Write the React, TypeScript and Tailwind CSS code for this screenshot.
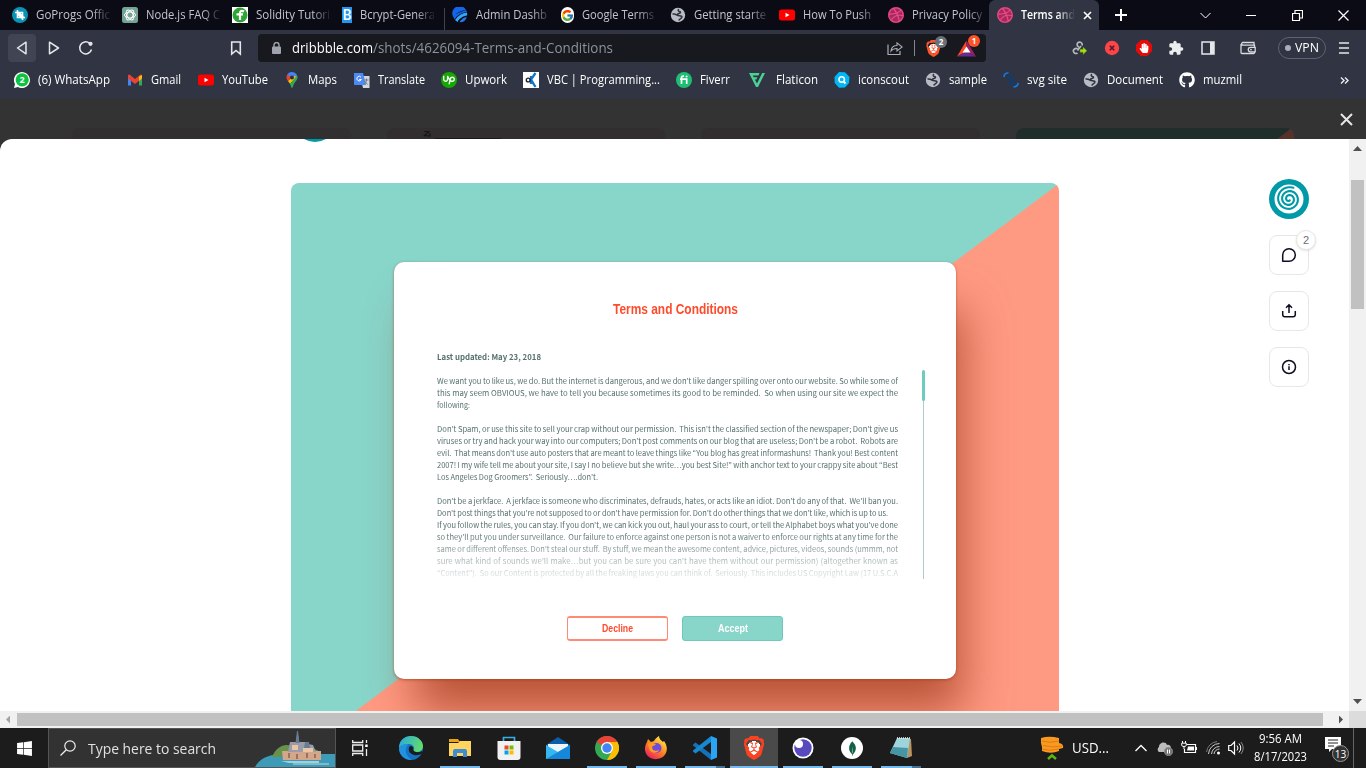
import { useLayoutEffect, useRef, type ReactNode } from "react";
import { SiBrave, SiUpwork, SiMongodb } from "react-icons/si";
import { FaGithub, FaDribbble, FaHandPaper, FaWindows } from "react-icons/fa";
import { MdExtension } from "react-icons/md";
import { FcGoogle } from "react-icons/fc";

const ui = "font-['Open_Sans','Noto_Sans',sans-serif]";

/** Single-line text condensed or widened to a given advance width. */
function Fit({ w, className = "", children }: { w: number; className?: string; children: string }) {
  const ref = useRef<HTMLSpanElement>(null);
  useLayoutEffect(() => {
    const el = ref.current;
    if (!el) return;
    el.style.transform = "none";
    const natural = el.getBoundingClientRect().width;
    if (natural) el.style.transform = `scaleX(${w / natural})`;
  }, [w, children]);
  return (
    <span className={`block shrink-0 whitespace-nowrap ${className}`} style={{ width: w }}>
      <span ref={ref} className="inline-block origin-left">{children}</span>
    </span>
  );
}

/** Paragraph line justified through its word gaps; tight lines are also condensed a little. */
function Line({ w, children }: { w: number; children: string }) {
  const ref = useRef<HTMLSpanElement>(null);
  useLayoutEffect(() => {
    const el = ref.current;
    if (!el) return;
    el.style.wordSpacing = "0px";
    el.style.transform = "none";
    const spaces = Math.max(1, children.split(" ").length - 1);
    const natural = el.getBoundingClientRect().width;
    const gap = Math.max(-0.25, (w - natural) / spaces);
    el.style.wordSpacing = `${gap}px`;
    const fitted = el.getBoundingClientRect().width;
    if (fitted) el.style.transform = `scaleX(${w / fitted})`;
  }, [w, children]);
  return (
    <div className="h-3 whitespace-pre leading-3">
      <span ref={ref} className="inline-block origin-left">{children}</span>
    </div>
  );
}

function Svg({ s = 16, v = "0 0 16 16", children }: { s?: number; v?: string; children: ReactNode }) {
  return (
    <svg width={s} height={s} viewBox={v} fill="none" className="block shrink-0">
      {children}
    </svg>
  );
}

const Globe = () => (
  <Svg>
    <circle cx="8" cy="8" r="7.2" fill="#b9bcc4" />
    <path d="M9 2.200C7.500 3 8.200 4.200 9.500 4.500c1.500.3 1.200 1.500 0 1.700-1.500.3-2.200.8-2.500 1.800M2.500 7c1.800-.3 3.200.2 4.500 1.200 1.200 1 3.200.4 4.500 1 .8.5.3 1.700-.7 2.200-1 .6-1 1.300-2.300 1.800" stroke="#30333f" strokeWidth="1.500" />
  </Svg>
);
const YouTube = () => (
  <Svg>
    <rect x="0" y="2.500" width="16" height="11" rx="2.500" fill="#f00" />
    <path d="M6.500 5.700v4.600l4-2.300z" fill="#fff" />
  </Svg>
);
const Dribbble = () => (
  <span className="flex size-4 items-center justify-center rounded-full bg-[#a82a5c] text-[16px] text-[#ea4c89]">
    <FaDribbble />
  </span>
);

const tabs: { w: number; pl: number; t: string; tw: number; icon: ReactNode; last?: boolean }[] = [
  { w: 115, pl: 12, t: "GoProgs Offic", tw: 74, icon: <Svg><circle cx="8" cy="8" r="8" fill="#0a93b5" /><path d="M5.500 3v7.500H13M3 5.500h7.500V13" stroke="#fff" strokeWidth="1.600" /><path d="m6 6 4.500 4.500" stroke="#fff" strokeWidth="3.500" /></Svg> },
  { w: 110, pl: 7, t: "Node.js FAQ C", tw: 74, icon: <Svg><rect width="16" height="16" rx="2.500" fill="#74a594" /><g stroke="#fff" strokeWidth="1"><ellipse cx="8" cy="8" rx="5.500" ry="3" /><ellipse cx="8" cy="8" rx="5.500" ry="3" transform="rotate(60 8 8)" /><ellipse cx="8" cy="8" rx="5.500" ry="3" transform="rotate(120 8 8)" /></g></Svg> },
  { w: 110, pl: 7, t: "Solidity Tutori", tw: 74, icon: <Svg><path fill="#fff" d="M0 0h16v16H0z" /><circle cx="8" cy="8" r="7.500" fill="#2fa336" /><path d="M12 4.500C9.500 3 8 4 8 6.500V13M4.500 7.300h6.500" stroke="#fff" strokeWidth="2.200" /></Svg> },
  { w: 110, pl: 7, t: "Bcrypt-Genera", tw: 75, icon: <span className="flex size-4 items-center justify-center bg-[#2196f3] font-['Roboto',sans-serif] text-[14px] font-medium leading-4 text-white">B</span> },
  { w: 109, pl: 7, t: "Admin Dashb", tw: 71, icon: <Svg><path d="M1 9.500A7.200 7.200 0 0 1 14 3C9 3.500 4 6 1 9.500z" fill="#1565e8" /><path d="M1.500 10.500A7.200 7.200 0 0 1 1 8L14 3l1 2C10 5.500 5 8 2.500 12.500z" fill="#1565e8" /><path d="M3 13C6 8.500 10 6 15 5.500c.3 1 .3 2 .1 3-4 .5-8 3-9.600 6.500z" fill="#37a6f7" /><path d="M7.500 15.200c1.500-3 4-4.800 7.300-5.300A7.200 7.200 0 0 1 7.500 15.200z" fill="#1f7bf0" /></Svg> },
  { w: 109, pl: 7, t: "Google Terms", tw: 72, icon: <span className="flex size-4 items-center justify-center rounded-full bg-white text-[13px]"><FcGoogle /></span> },
  { w: 109, pl: 7, t: "Getting starte", tw: 72, icon: <Globe /> },
  { w: 109, pl: 7, t: "How To Push", tw: 68, icon: <YouTube /> },
  { w: 108, pl: 7, t: "Privacy Policy", tw: 70, icon: <Dribbble />, last: true },
];

function TabStrip() {
  return (
    <div className="flex h-[30px] bg-[#0a0b14] text-[12px] text-[#c3c4cb]">
      {tabs.map((t) => (
        <div key={t.t} className="flex shrink-0 items-center gap-2" style={{ width: t.w, paddingLeft: t.pl }}>
          {t.icon}
          <div className="h-5 w-[76px] shrink-0 overflow-hidden [mask-image:linear-gradient(90deg,#000_56px,transparent_76px)]">
            <Fit w={t.tw} className="leading-5">{t.t}</Fit>
          </div>
          {!t.last && <div className="mt-2 ml-auto h-[23px] w-px bg-[#40414a]" />}
        </div>
      ))}
      <div className="flex w-[110px] shrink-0 items-center gap-2 rounded-t-[6px] bg-[#313442] pl-2 text-white">
        <Dribbble />
        <div className="h-5 w-[54px] overflow-hidden [mask-image:linear-gradient(90deg,#000_36px,transparent_54px)]">
          <Fit w={54} className="font-semibold leading-5">Terms and</Fit>
        </div>
        <Svg s={9} v="0 0 9 9"><path d="m1 1 7 7M8 1 1 8" stroke="#fff" strokeWidth="1.600" /></Svg>
      </div>
      <div className="flex w-11 items-center justify-center">
        <Svg s={12} v="0 0 12 12"><path d="M6 0v12M0 6h12" stroke="#fff" strokeWidth="2" /></Svg>
      </div>
      <div className="ml-auto flex [&>div]:flex [&>div]:w-[46px] [&>div]:items-center [&>div]:justify-center">
        <div><Svg s={11} v="0 0 11 11"><path d="m.5 3 5 5 5-5" stroke="#fff" /></Svg></div>
        <div><div className="h-px w-2.5 bg-white" /></div>
        <div><Svg s={11} v="0 0 11 11"><path d="M.5 3.500h7v7h-7zM3 3V.5h7.500V8H8" stroke="#fff" strokeWidth="1.200" /></Svg></div>
        <div><Svg s={11} v="0 0 11 11"><path d="m.5.5 10 10m0-10-10 10" stroke="#fff" strokeWidth="1.200" /></Svg></div>
      </div>
    </div>
  );
}

function Toolbar() {
  return (
    <div className="flex h-9 items-center bg-[#313442]">
      <div className="ml-2 flex h-7 w-7 items-center justify-center rounded bg-[#414452]">
        <Svg><path d="M12 2.200v11.600L3.500 8z" stroke="#e6e7ea" strokeWidth="1.500" strokeLinejoin="round" /></Svg>
      </div>
      <div className="ml-2.5"><Svg><path d="M3.500 2.200v11.600L12.500 8z" stroke="#e6e7ea" strokeWidth="1.500" strokeLinejoin="round" /></Svg></div>
      <div className="ml-4"><Svg><path d="M13.500 9.500A6 6 0 1 1 11.500 3.200" stroke="#e6e7ea" strokeWidth="1.500" /><circle cx="12.500" cy="3.800" r="2.100" fill="#e6e7ea" /></Svg></div>
      <div className="ml-[134px]"><Svg><path d="M3.700 2h8.600v12L8 10.500 3.700 14z" stroke="#e6e7ea" strokeWidth="1.600" /></Svg></div>
      <div className="ml-[14px] flex h-7 w-[728px] items-center rounded bg-[#17191f] text-[14px]">
        <div className="ml-3.5">
          <svg width="9" height="12" viewBox="0 0 9 12" fill="none" className="block"><rect y="4.500" width="9" height="7.500" rx="1" fill="#a0a3ad" /><path d="M2 5V3a2.500 2.500 0 0 1 5 0v2" stroke="#a0a3ad" strokeWidth="1.400" /></svg>
        </div>
        <Fit w={81} className="ml-[11px] leading-6 text-white">dribbble.com</Fit>
        <Fit w={240} className="leading-6 text-[#8e929b]">/shots/4626094-Terms-and-Conditions</Fit>
        <div className="ml-[274px]"><Svg><path d="M1 4.500v10h12V11" stroke="#a9acb5" strokeWidth="1.200" /><path d="M4 11c.5-4 2.500-5.500 6-5.500V2.800L15.200 7 10 11V8.500c-2.500 0-4.500.5-6 2.500z" stroke="#a9acb5" strokeWidth="1.100" /></Svg></div>
        <div className="ml-[11px] h-4 w-px bg-[#85878e]" />
        <div className="relative ml-2.5 text-[17px] text-[#fb542b]">
          <div className="[background:radial-gradient(circle,#fff_40%,transparent_42%)]"><SiBrave /></div>
          <span className="absolute -top-1 left-[10px] flex size-3 items-center justify-center rounded-full bg-[#6b7078] text-[8px] font-bold leading-3 text-white">2</span>
        </div>
        <div className="relative ml-[15px]">
          <Svg s={19} v="0 0 19 16"><path d="M9.500 0 0 16l9.500-5z" fill="#ff4724" /><path d="M0 16h19l-9.500-5z" fill="#662d91" /><path d="M9.500 0 19 16l-9.500-5z" fill="#9e1f63" /><path d="m9.500 6 4 6h-8z" fill="#fff" /></Svg>
          <span className="absolute -top-1 left-[11px] flex size-3 items-center justify-center rounded-full bg-[#fb542b] text-[8px] font-bold leading-3 text-white">1</span>
        </div>
      </div>
      <div className="ml-[86px] flex w-4"><Svg><path d="M7 7a2.500 2.500 0 1 1 3-1.500M6 9.500a2.500 2.500 0 1 0-.5 3.500M5.500 10.500 9 6" stroke="#b5b8be" strokeWidth="1.700" /><path d="M8 9.300h3V7l4 3.700L11 14.500v-2.300H8z" fill="#a4de13" stroke="#55820b" strokeWidth=".5" /></Svg></div>
      <div className="ml-4"><Svg><circle cx="8" cy="8" r="7.200" fill="#fb4549" /><path d="m5.800 5.800 4.400 4.400m0-4.400-4.400 4.400" stroke="#4c1a20" strokeWidth="1.600" /></Svg></div>
      <div className="ml-4 flex size-4 items-center justify-center bg-[#e60b0b] text-[10px] text-white [clip-path:polygon(30%_0,70%_0,100%_30%,100%_70%,70%_100%,30%_100%,0_70%,0_30%)]"><FaHandPaper /></div>
      <div className="ml-4 text-[16px] text-[#eceded]"><MdExtension /></div>
      <div className="ml-4"><Svg><path d="M2 2h12v12H2z" stroke="#e6e7ea" strokeWidth="1.500" /><path d="M10 2h4v12h-4z" fill="#e6e7ea" /></Svg></div>
      <div className="ml-6"><Svg><path d="M14 5.200V2.500H2.500a1.500 1.500 0 0 0 0 2.700M1 4v8.500a1 1 0 0 0 1 1h11.500a1 1 0 0 0 1-1M2 5.200h12.500v2.300M15.200 7.300v4.500H10.500a2.200 2.200 0 0 1 0-4.500z" stroke="#d9dade" strokeWidth="1.300" /><circle cx="11" cy="9.600" r=".9" fill="#d9dade" /></Svg></div>
      <div className="ml-[22px] flex h-[22px] w-12 items-center gap-1 rounded-full border border-[#5e6372] pl-1.5 text-[12px] text-white">
        <div className="size-1.5 shrink-0 rounded-full bg-[#a9adc0]" />
        <Fit w={24} className="leading-5">VPN</Fit>
      </div>
      <div className="ml-[13px]">
        <svg width="10" height="12" viewBox="0 0 10 12" fill="none" className="block"><path d="M0 1h10M0 6h10M0 11h10" stroke="#e6e7ea" strokeWidth="1.600" /></svg>
      </div>
    </div>
  );
}

const bookmarks: { x: number; t: string; tw: number; icon: ReactNode }[] = [
  { x: 22, t: "(6) WhatsApp", tw: 72, icon: <Svg><path d="M0 16l1-4a8 8 0 1 1 3 3z" fill="#fff" /><circle cx="8.200" cy="7.800" r="6.600" fill="#0bc33f" /><text x="5.600" y="11" fontSize="9" fontWeight="700" fill="#fff">2</text></Svg> },
  { x: 135, t: "Gmail", tw: 30, icon: <Svg><path d="M1 3v10.500h3V7z" fill="#4285f4" /><path d="M15 3v10.500h-3V7z" fill="#34a853" /><path d="M1 3v3.500L8 12l7-5.500V3l-1.500-.5L8 7 2.500 2.500z" fill="#ea4335" /><path d="M12 4.500 15 3v3.500L12 9z" fill="#fbbc04" /></Svg> },
  { x: 206, t: "YouTube", tw: 46, icon: <YouTube /> },
  { x: 292, t: "Maps", tw: 29, icon: <Svg><path d="M8 0a5.500 5.500 0 0 0-5 3l8 6.500L13.500 6A5.500 5.500 0 0 0 8 0z" fill="#4285f4" /><path d="M3 3c-1.200 2.500-.2 4.500 1 6l4-4.500z" fill="#ea4335" /><path d="M4 9c1 1.300 1.500 2 2 3l6.500-7.500-3-.5z" fill="#fbbc04" /><path d="M6 12c1 1.500 1 4 2 4s1-3 2.500-5c2-2.500 3.500-4 2.500-7.500z" fill="#34a853" /><circle cx="8" cy="5.500" r="2" fill="#30333f" /></Svg> },
  { x: 362, t: "Translate", tw: 47, icon: <Svg><path d="M6 4h9.500v12H9z" fill="#d4d7dc" /><path d="M0 1h9l3 12H1a1 1 0 0 1-1-1z" fill="#4c8bf5" /><path d="M7 5.200A2.300 2.300 0 1 0 7.300 7.500H5.200" stroke="#fff" /><path d="M10 8h4.500m-2-1.500V8c0 2-1.200 3.500-2.500 4.500m.5-3.500 3 3.500" stroke="#747b87" /></Svg> },
  { x: 449, t: "Upwork", tw: 42, icon: <span className="flex size-4 items-center justify-center rounded-full bg-[#14a800] text-[12px] text-white"><SiUpwork /></span> },
  { x: 531, t: "VBC | Programming...", tw: 113, icon: <Svg><path fill="#fff" d="M0 0h16v16H0z" /><path d="m12.500 1-4.500 6.500 4.500 7.500M8 4v8" stroke="#1274c8" strokeWidth="2.300" /><circle cx="5.200" cy="8" r="1.900" stroke="#172332" strokeWidth="1.400" /></Svg> },
  { x: 684, t: "Fiverr", tw: 30, icon: <Svg><circle cx="8" cy="8" r="8" fill="#1dbf73" /><path d="M8 4.200H7.200C6 4.200 5.500 5 5.500 6v6M4 7.200h6.700V12" stroke="#fff" strokeWidth="1.700" /><circle cx="10.600" cy="4.600" r="1" fill="#fff" /></Svg> },
  { x: 757, t: "Flaticon", tw: 42, icon: <Svg><path d="M0 1h10.500L9.500 3.500H3.800l.9 1.700h3.600L7.500 7.500H5.800L8 11.500 13.200 1H16L9 15H7z" fill="#4ad295" /></Svg> },
  { x: 842, t: "iconscout", tw: 51, icon: <Svg><path d="m5 0 6 .2L15.500 5 15 11l-4 4.500L5 15.700.7 11 .5 5z" fill="#00b8f8" /><circle cx="7.700" cy="7.400" r="2.700" stroke="#fff" strokeWidth="1.600" /><path d="m9.500 9.500 2 2" stroke="#fff" strokeWidth="1.800" /></Svg> },
  { x: 933, t: "sample", tw: 38, icon: <Globe /> },
  { x: 1011, t: "svg site", tw: 40, icon: <Svg><path d="M.8 5A5 5 0 0 1 5.500.8M10.500 15A5 5 0 0 0 15.300 11" stroke="#0d7df2" strokeWidth="1.600" /><path d="M10.800 5C9 3.600 5.500 3.800 5.500 6c0 2.300 5.200 1.500 5.200 4 0 2.300-4 2.300-5.700.6" stroke="#153b68" strokeWidth="2.400" /></Svg> },
  { x: 1091, t: "Document", tw: 56, icon: <Globe /> },
  { x: 1187, t: "muzmil", tw: 39, icon: <span className="text-[16px] text-white"><FaGithub /></span> },
];

function Bookmarks() {
  return (
    <div className="flex h-[33px] items-center bg-[#313442] pb-[5px] pl-3.5 text-[12px] text-white">
      {bookmarks.map((b, i) => (
        <div key={b.t} className="flex shrink-0 items-center gap-2" style={{ width: (bookmarks[i + 1]?.x ?? 1347.5) - b.x }}>
          {b.icon}
          <Fit w={b.tw} className={b.t === "Flaticon" ? "ml-[3px] leading-5" : "leading-5"}>{b.t}</Fit>
        </div>
      ))}
      <Svg s={9} v="0 0 9 8"><path d="m1 1 3 3-3 3m4-6 3 3-3 3" stroke="#eee" strokeWidth="1.400" /></Svg>
    </div>
  );
}

const paragraphs: [number, string][][] = [
  [
    [461, "We want you to like us, we do. But the internet is dangerous, and we don’t like danger spilling over onto our website. So while some of"],
    [461, "this may seem OBVIOUS, we have to tell you because sometimes its good to be reminded.  So when using our site we expect the"],
    [33, "following:"],
  ],
  [
    [461, "Don’t Spam, or use this site to sell your crap without our permission.  This isn’t the classified section of the newspaper; Don’t give us"],
    [461, "viruses or try and hack your way into our computers; Don’t post comments on our blog that are useless; Don’t be a robot.  Robots are"],
    [461, "evil.  That means don’t use auto posters that are meant to leave things like “You blog has great informashuns!  Thank you! Best content"],
    [461, "2007! I my wife tell me about your site, I say I no believe but she write…you best Site!” with anchor text to your crappy site about “Best"],
    [161, "Los Angeles Dog Groomers”.  Seriously….don’t."],
  ],
  [
    [461, "Don’t be a jerkface.  A jerkface is someone who discriminates, defrauds, hates, or acts like an idiot. Don’t do any of that.  We’ll ban you."],
    [451, "Don’t post things that you’re not supposed to or don’t have permission for. Don’t do other things that we don’t like, which is up to us."],
    [461, "If you follow the rules, you can stay. If you don’t, we can kick you out, haul your ass to court, or tell the Alphabet boys what you’ve done"],
    [461, "so they’ll put you under surveillance.  Our failure to enforce against one person is not a waiver to enforce our rights at any time for the"],
    [461, "same or different offenses. Don’t steal our stuff.  By stuff, we mean the awesome content, advice, pictures, videos, sounds (ummm, not"],
    [461, "sure what kind of sounds we’ll make…but you can be sure you can’t have them without our permission) (altogether known as"],
    [461, "“Content”).  So our Content is protected by all the freaking laws you can think of.  Seriously. This includes US Copyright Law (17 U.S.C.A"],
  ],
];

function Shot() {
  return (
    <div className="h-[528px] w-[768px] overflow-hidden rounded-t-lg">
      <div className="h-[576px] bg-[linear-gradient(to_bottom_right,#88d5ca_50%,#ff9a82_50.1%)] pt-[79px] pl-[103px]">
        <div className="flex h-[417px] w-[562px] flex-col rounded-[10px] bg-white shadow-[0_1px_3px_rgba(170,50,15,0.6),14px_40px_46px_-8px_rgba(142,42,12,0.62)]">
          <div className="mt-[37px] flex justify-center font-['Liberation_Sans_Narrow','Liberation_Sans',sans-serif] text-[14.5px] font-bold leading-5 text-[#ff4b2b]">
            <Fit w={125}>Terms and Conditions</Fit>
          </div>
          <div className="mt-[32px] flex pl-[43px] font-['Noto_Sans_CJK_KR',sans-serif] text-[7.8px] text-[#56706e]">
            <div className="h-[234px] w-[461px] [mask-image:linear-gradient(#000_180px,transparent_236px)]">
              <div className="flex h-3"><Fit w={104} className="font-bold leading-3">Last updated: May 23, 2018</Fit></div>
              {paragraphs.map((p, i) => (
                <div key={i} className="mt-3">
                  {p.map(([w, t]) => <Line key={t} w={w}>{t}</Line>)}
                </div>
              ))}
            </div>
            <div className="mt-[19px] ml-[24px] flex h-[209px] w-[3px] flex-col items-center">
              <div className="h-[31px] w-[3px] rounded bg-[#6dccbf]" />
              <div className="w-[1.500px] grow bg-[#afcaca]" />
            </div>
          </div>
          <div className="mt-[31px] flex gap-[14px] pl-[173px] font-['Liberation_Sans_Narrow','Liberation_Sans',sans-serif] text-[10.5px] font-bold">
            <button className="flex h-[25px] w-[101px] items-center justify-center rounded-[3px] border-x border-y-2 border-[#ff8a75] text-[#ff4b2b]"><Fit w={31}>Decline</Fit></button>
            <button className="flex h-[25px] w-[101px] items-center justify-center rounded-[3px] border border-[#70c8bc] bg-[#88d5ca] text-white"><Fit w={30}>Accept</Fit></button>
          </div>
        </div>
      </div>
    </div>
  );
}

/** Archimedean spiral centred in the 40px logo. */
const spiral = Array.from({ length: 81 }, (_, i) => {
  const a = 1 + (i / 80) * 2 * Math.PI * 2.65;
  const r = 1.5 + (i / 80) * 10.6;
  return `${i ? "L" : "M"}${(20 + r * Math.cos(a)).toFixed(2)} ${(20 + r * Math.sin(a)).toFixed(2)}`;
}).join("");

function Side() {
  const box = "relative flex size-10 items-center justify-center rounded-lg border border-[#e7e7e9]";
  return (
    <div className="mt-10 flex w-10 flex-col gap-4 text-[#0d0c22]">
      <Svg s={40} v="0 0 40 40">
        <circle cx="20" cy="20" r="20" fill="#0099a8" />
        <circle cx="20" cy="20" r="14.500" fill="#fff" />
        <path d={spiral} stroke="#0099a8" strokeWidth="2.100" strokeLinecap="round" />
      </Svg>
      <div className={box}>
        <Svg s={16}><path d="M1.700 14.300V8A6.300 6.300 0 1 1 8 14.300z" stroke="currentColor" strokeWidth="1.500" strokeLinejoin="round" /></Svg>
        <span className="absolute -top-[6px] left-[26px] flex size-5 items-center justify-center rounded-full border border-[#e7e7e9] bg-white font-['Liberation_Sans',sans-serif] text-[11px] text-[#6e6d7a] shadow-sm">2</span>
      </div>
      <div className={box}>
        <Svg s={16}><path d="M8 10V2M5 4.800 8 1.800l3 3M1.700 8v3.500q0 2.300 2.300 2.300h8q2.300 0 2.300-2.300V8" stroke="currentColor" strokeWidth="1.500" /></Svg>
      </div>
      <div className={box}>
        <Svg s={16}><circle cx="8" cy="8" r="6.500" stroke="currentColor" strokeWidth="1.500" /><path d="M8 7.300V11M8 5v1.300" stroke="currentColor" strokeWidth="1.500" /></Svg>
      </div>
    </div>
  );
}

function Page() {
  return (
    <div className="flex h-[629px] flex-col bg-[#333333]">
      <div className="flex h-10 items-end">
        <div className="ml-[72px] h-[11px] w-[279px] rounded-t-lg bg-[#322f30]" />
        <div className="ml-9 flex h-[11px] w-[278px] items-end rounded-t-lg bg-[#322e2f]">
          <div className="ml-9 mb-px"><Svg s={8} v="0 0 8 8"><path d="M1 1.500h5L1.500 5.500 7 6V3" stroke="#171516" strokeWidth="1.200" /></Svg></div>
          <div className="ml-1 h-px w-[66px] bg-[#1d191a]" />
        </div>
        <div className="ml-9 h-[11px] w-[279px] rounded-t-lg bg-[#322e2f]" />
        <div className="ml-9 h-[11px] w-[278px] rounded-t-lg bg-[linear-gradient(143deg,#1f2d2b_94%,#56322b_94.5%)]" />
        <div className="mb-[13px] ml-[46px]"><Svg s={13} v="0 0 13 13"><path d="m1 1 11 11M12 1 1 12" stroke="#e8e8e8" strokeWidth="2" /></Svg></div>
      </div>
      <div className="flex h-[572px]">
        <div className="flex w-[1349px] rounded-tl-xl bg-white">
          <div className="ml-[291px] flex w-[768px] flex-col">
            <div className="h-11 pl-3"><Svg s={24} v="0 0 24 24"><path d="M1 0q11 6 22 0z" fill="#0099a8" /></Svg></div>
            <Shot />
          </div>
          <div className="ml-[210px]"><Side /></div>
        </div>
        <div className="flex w-[17px] flex-col items-center bg-[#f1f1f1]">
          <div className="mt-[7px] h-[5px] w-[9px] bg-[#505050] [clip-path:polygon(50%_0,100%_100%,0_100%)]" />
          <div className="mt-[29px] h-[129px] w-[13px] bg-[#c1c1c1]" />
          <div className="mt-auto mb-[7px] h-[5px] w-[9px] bg-[#505050] [clip-path:polygon(0_0,100%_0,50%_100%)]" />
        </div>
      </div>
      <div className="flex h-[17px] items-center bg-[#f1f1f1]">
        <div className="ml-1.5 h-2 w-1 bg-[#a3a3a3] [clip-path:polygon(0_50%,100%_0,100%_100%)]" />
        <div className="ml-[7px] h-[13px] w-[1306px] bg-[#c1c1c1]" />
        <div className="ml-4 h-2 w-1 bg-[#505050] [clip-path:polygon(0_0,100%_50%,0_100%)]" />
        <div className="ml-auto h-full w-[17px] bg-[#dcdcdc]" />
      </div>
    </div>
  );
}

const apps: { n: string; icon: ReactNode; bar?: "one" | "two" | "active" }[] = [
  { n: "edge", icon: <Svg s={24} v="0 0 24 24"><defs><linearGradient id="eg" x1="0" y1="0" x2="24" y2="8" gradientUnits="userSpaceOnUse"><stop stopColor="#2aa7e0" /><stop offset="1" stopColor="#61dd6c" /></linearGradient></defs><circle cx="12" cy="12" r="12" fill="#1272c4" /><path d="M0 12C0 4 6 0 12 0c7 0 12 5 12 10 0 4-3 6-6.500 6-3 0-4-1.200-3-2.500 1.500-2-.5-5.500-5-5.500C4 8 1 11 0 12z" fill="url(#eg)" /><path d="M10.500 10.500c-2 3.500 0 7.500 4.500 8.500 3 .5 6 0 8.500-2l1 2-1.500-4c-4 2.500-10 .8-8.500-2.500 0-1.500-2.500-3.500-4-2z" fill="#1c1c1c" /><path d="M0 12c1-3 5-4.500 9.500-3.500C5 12 6 20 13 23.900 5 24 0 19 0 12z" fill="#2292de" /></Svg> },
  { n: "files", bar: "one", icon: <Svg s={24} v="0 0 24 24"><path d="M1 3h9l2 3H1z" fill="#e8a317" /><path d="M1 7h9l2-2h11v15H1z" fill="#ffd45f" /><path d="M5 21v-6q0-2 2-2h10q2 0 2 2v6h-4v-4H9v4z" fill="#3c8dd4" /></Svg> },
  { n: "store", icon: <Svg s={24} v="0 0 24 24"><path d="M6.500 6V1.500h11V6" stroke="#35aee2" strokeWidth="1.700" /><path d="M.5 5h23v16q0 3-3 3h-17q-3 0-3-3z" fill="#f1f1f1" /><path d="M7.500 9.500h4v4h-4z" fill="#e74c28" /><path d="M12.500 9.500h4v4h-4z" fill="#7fba00" /><path d="M7.500 14.500h4v4h-4z" fill="#00a4ef" /><path d="M12.500 14.500h4v4h-4z" fill="#ffb900" /></Svg> },
  { n: "mail", icon: <Svg s={24} v="0 0 24 24"><path d="m0 9 12-8 12 8v3H0z" fill="#0d5ca8" /><path d="M2 8h20v8H2z" fill="#eef4f9" /><path d="m0 9 12 7 12-7v14H0z" fill="#35b8f1" /><path d="m0 23 24-14v14z" fill="#1688dc" /></Svg> },
  { n: "chrome", bar: "one", icon: <Svg s={24} v="0 0 24 24"><circle cx="12" cy="12" r="12" fill="#34a853" /><path d="M12 12 1.600 6A12 12 0 0 1 22.400 6z" fill="#ea4335" /><path d="M12 6h10.400A12 12 0 0 1 12 24l5-9z" fill="#fbbc04" /><circle cx="12" cy="12" r="6" fill="#fff" /><circle cx="12" cy="12" r="4.700" fill="#4285f4" /></Svg> },
  { n: "firefox", bar: "one", icon: <Svg s={24} v="0 0 24 24"><defs><linearGradient id="ff" x1="20" y1="2" x2="5" y2="23" gradientUnits="userSpaceOnUse"><stop stopColor="#fff04d" /><stop offset=".45" stopColor="#ff8b1d" /><stop offset="1" stopColor="#ed1763" /></linearGradient></defs><path d="M3 6 4 3l3 3 3-1c1-2 3-4 5-5 0 3 2 4 4 6l1-1c5 7 3 14-3 17C10 25 2 22 1 14 .7 10 2 8 3 6z" fill="url(#ff)" /><circle cx="12.500" cy="12" r="5" fill="#704be0" /><path d="M4 8c3-2 7-1 8 1-2 0-3 1-4 2 0 3 3 5 7 3-1 4-9 4-10-2z" fill="#ff9b20" /></Svg> },
  { n: "code", bar: "two", icon: <Svg s={24} v="0 0 24 24"><path d="m0 8.500 2.500-2L18 18v6L0 9.500z" fill="#1672b8" /><path d="m0 15.500 2.500 2L18 6V0L0 14.500z" fill="#1688d2" /><path d="m18 0 6 2.500v19L18 24z" fill="#2ba5f3" /></Svg> },
  { n: "brave", bar: "active", icon: <span className="flex size-6 items-center justify-center text-[24px] text-[#fb4220] [background:radial-gradient(circle,#fff_40%,transparent_41%)]"><SiBrave /></span> },
  { n: "eclipse", bar: "one", icon: <Svg s={24} v="0 0 24 24"><circle cx="12" cy="12" r="10.500" fill="#fff" /><circle cx="12" cy="12" r="8.700" fill="#5849be" /><circle cx="8" cy="8" r="4" fill="#fff" /></Svg> },
  { n: "mongo", bar: "one", icon: <span className="flex size-[22px] items-center justify-center rounded-full bg-white text-[15px] text-[#116149]"><SiMongodb /></span> },
  { n: "notes", bar: "two", icon: <Svg s={24} v="0 0 24 24"><path d="m8 2 14 1 1 17-5 2z" fill="#b89562" /><path d="M8 2h13l-3 20-17-5z" fill="#9ed4dc" /><path d="m4 11 15 1-1 10-17-5z" fill="#4595a4" /><path d="M8 2h13" stroke="#eee" strokeWidth="1.500" strokeDasharray="1 1" /></Svg> },
];

function Taskbar() {
  return (
    <div className="flex h-10 bg-[#1c1c1c] text-white">
      <div className="flex w-12 items-center justify-center text-[17px]"><FaWindows /></div>
      <div className="flex h-10 w-72 items-center border border-[#555] bg-[#323232] pl-[11px]">
        <Svg s={16}><circle cx="10" cy="6" r="5.200" stroke="#eee" strokeWidth="1.200" /><path d="M6.300 9.800.5 15.500" stroke="#eee" strokeWidth="1.300" /></Svg>
        <Fit w={128} className="ml-[12px] text-[15px] leading-6 text-[#e0e0e0]">Type here to search</Fit>
        <svg width="80" height="38" viewBox="0 0 80 38" className="ml-auto block">
          <path d="M0 38c5-9 14-13 30-13h50v13z" fill="#3e9bb8" />
          <path d="M17 28c2-5 6-11 14-12l24 2 11 5-3 5z" fill="#67924c" />
          <path d="M27 22h39v9H28z" fill="#d4a78a" />
          <path d="M35 13h6l1.500-11L44 13h6l3 2 5 1 3 7H33z" fill="#9b9ca9" />
          <path d="M42 2h1l1.500 12h-4zM50 13h4l1 6h-6z" fill="#687c93" />
          <path d="M37 16h6v5h-6zm11 3h10v4H48z" fill="#ecc6a4" />
          <path d="M33 24h2v5h-2zm8 1h2v5h-2zm10-1h2v5h-2zm8 1h2v4h-2z" fill="#987266" />
          <path d="M26 32h38v2H34z" fill="#a5d0d8" />
          <path d="M38 35h36" stroke="#d6eef2" strokeWidth=".8" />
        </svg>
      </div>
      <div className="flex w-[51px] items-center pl-4">
        <Svg s={16}><path d="M.7 0v2.500h10V0M.7 16v-2.500h10V16M.7 5h10v6H.7zM14.500 0v3m0 6v7" stroke="#eee" strokeWidth="1.300" /><path d="M13.200 4.500h2.500V7h-2.500z" fill="#fff" /></Svg>
      </div>
      <div className="flex gap-px">
        {apps.map((a) => (
          <div key={a.n} className={`flex h-10 w-12 flex-col items-center ${a.bar === "active" ? "bg-[#4a4a4a]" : ""}`}>
            <div className="flex h-[38px] items-center pt-0.5">{a.icon}</div>
            {a.bar === "one" && <div className="h-0.5 w-10 bg-[#76b9ed]" />}
            {a.bar === "active" && <div className="h-0.5 w-12 bg-[#76b9ed]" />}
            {a.bar === "two" && <div className="flex h-0.5 w-10 bg-[#48719a]"><div className="w-[31px] bg-[#76b9ed]" /></div>}
          </div>
        ))}
      </div>
      <div className="ml-[115px] flex items-center">
        <Svg s={24} v="0 0 24 24"><path d="M1 2q8-2.500 18 0v5q5 1 4 5l-4 1v2q-8 3.500-17 0v-4L1 7z" fill="#f99a1e" /><path d="M2 5q8 2.500 17 0M3 9.500q10 2.500 19 .5M2 13q8 2.500 17 0" stroke="#d9761a" strokeWidth=".9" /><path d="m8 23 4-3.500 4 3.500" stroke="#5cb60f" strokeWidth="2.500" /></Svg>
        <Fit w={37} className="ml-2 text-[14px] leading-6">USD...</Fit>
        <div className="ml-[26px]"><Svg s={12} v="0 0 12 12"><path d="m.5 9 5.500-5.500L11.500 9" stroke="#fff" strokeWidth="1.300" /></Svg></div>
        <div className="ml-[10px]"><Svg s={16}><path d="M2 12a3 3 0 0 1 0-5c0-5 7-6 8-2 4-1 5 4 3 7z" fill="#bdbdbd" /><circle cx="11.500" cy="11.500" r="4.200" fill="#777" stroke="#999" strokeWidth=".6" /><path d="M10.500 9.500v4m2-4v4" stroke="#fff" /></Svg></div>
        <div className="ml-[8px]"><Svg s={16}><path d="M6 4.500h8.500v8H3.500V9" stroke="#fff" strokeWidth="1.200" /><path d="M7 6.500h6v4H6zM14.500 7H16v3h-1.500z" fill="#fff" /><path d="M1.500 1v2m3-2v2M.7 3.200h4.600v2q0 1.300-2.300 1.300T.7 5.200zM3 6.500V9" stroke="#fff" /></Svg></div>
        <div className="ml-[9px]"><Svg s={16}><path d="M2.500 14A11 11 0 0 1 13.500 3.500M5.500 14A8 8 0 0 1 13.500 6.500M8 14a5.500 5.500 0 0 1 5.500-5" stroke="#ccc" /><path d="M.5 12A12 12 0 0 1 11 1.500" stroke="#777" /><circle cx="12.500" cy="13" r="1.500" fill="#fff" /></Svg></div>
        <div className="ml-[6px]"><Svg s={16}><path d="M.7 5.500H3L6.500 2v12L3 10.500H.7z" stroke="#fff" strokeWidth="1.200" /><path d="M9 5.500q2 2.500 0 5M11 3.500q3.500 4.500 0 9" stroke="#fff" /><path d="M13 2q4.500 6 0 12" stroke="#888" /></Svg></div>
        <div className="ml-[10px] flex w-[53px] flex-col items-center text-[12px] leading-[18px]">
          <Fit w={43}>9:56 AM</Fit>
          <Fit w={53}>8/17/2023</Fit>
        </div>
        <div className="relative ml-[18px] h-6">
          <Svg s={16}><path d="M0 0h16v12H7l-3 3v-3H0z" fill="#fff" transform="translate(0 1)" /><path d="M3 4h10M3 7h10M3 10h6" stroke="#222" /></Svg>
          <span className="absolute top-[9px] left-[7px] flex size-[17px] items-center justify-center rounded-full border border-[#999] bg-[#333] text-[10px] leading-3">13</span>
        </div>
        <div className="ml-3 h-10 w-px bg-[#666]" />
      </div>
    </div>
  );
}

export default function App() {
  return (
    <div className={`flex h-[768px] w-[1366px] flex-col overflow-hidden ${ui}`}>
      <TabStrip />
      <Toolbar />
      <Bookmarks />
      <Page />
      <Taskbar />
    </div>
  );
}
